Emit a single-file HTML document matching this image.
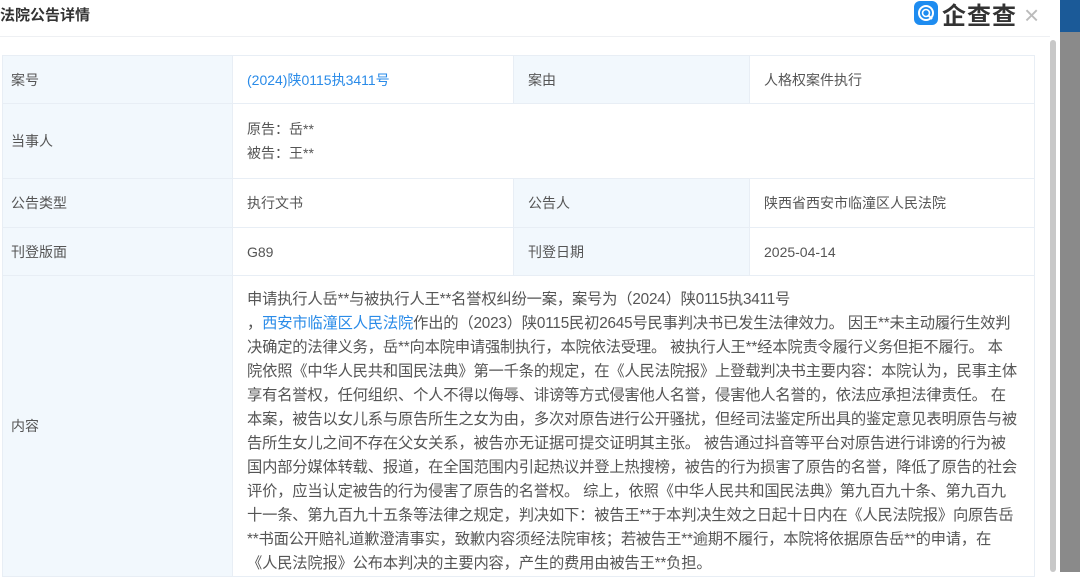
<!DOCTYPE html>
<html><head><meta charset="utf-8"><style>
body{margin:0;width:1080px;height:572px;overflow:hidden;background:#fff;font-family:"Liberation Sans","Noto Sans CJK SC",sans-serif;color:#555;position:relative}
.title{position:absolute;left:0;top:4px;font-size:15px;font-weight:bold;color:#333}
.logo{position:absolute;left:914px;top:0;height:26px;display:flex;align-items:center;font-size:24px;color:#333;font-weight:bold;letter-spacing:1px}
.logo .ic{width:24px;height:24px;background:#1e8cf0;border-radius:6px;margin-right:4px;display:flex;align-items:center;justify-content:center}
.x{position:absolute;left:1024px;top:0;font-size:26px;color:#bbb;font-weight:200}
.hr{position:absolute;left:0;top:36px;width:1050px;height:1px;background:#eef0f3}
.sb{position:absolute;left:1050px;top:40px;width:6px;height:532px;background:#c8c8c8;border-radius:3px}
.dark{position:absolute;left:1060px;top:0;width:20px;height:572px;background:#8a8a8a}
.darkt{position:absolute;left:1060px;top:0;width:20px;height:32px;background:#1b5a98}
table{position:absolute;left:2px;top:55px;border-collapse:collapse;font-size:14px}
td{border:1px solid #e8eef5;padding:0 0 0 14px;vertical-align:middle}
td.l{background:#f2f8fd;color:#555}
td.first{padding-left:8px}
a{color:#2a8be8;text-decoration:none}
.c div{white-space:nowrap;height:24px;line-height:24px;font-size:15.3px;letter-spacing:-0.2px}
</style></head><body>
<div class="title">法院公告详情</div>
<div class="logo"><div class="ic"><svg width="18" height="18" viewBox="0 0 18 18"><circle cx="9" cy="9" r="7" fill="none" stroke="#fff" stroke-width="2"/><circle cx="9" cy="9" r="3.5" fill="none" stroke="#fff" stroke-width="1.6"/><path d="M11 11l4 4" stroke="#fff" stroke-width="2"/></svg></div>企查查</div>
<div class="x">×</div>
<div class="hr"></div>
<table>
<tr style="height:48px"><td class="l first" style="width:221px">案号</td><td style="width:266px"><a>(2024)陕0115执3411号</a></td><td class="l" style="width:221px">案由</td><td style="width:270px">人格权案件执行</td></tr>
<tr style="height:75px"><td class="l first">当事人</td><td colspan="3" style="line-height:24px">原告：岳**<br>被告：王**</td></tr>
<tr style="height:49px"><td class="l first">公告类型</td><td>执行文书</td><td class="l">公告人</td><td>陕西省西安市临潼区人民法院</td></tr>
<tr style="height:48px"><td class="l first">刊登版面</td><td>G89</td><td class="l">刊登日期</td><td>2025-04-14</td></tr>
<tr style="height:300px"><td class="l first">内容</td><td colspan="3" class="c" style="vertical-align:top;padding-top:12px;padding-left:14px">
<div>申请执行人岳**与被执行人王**名誉权纠纷一案，案号为（2024）陕0115执3411号</div>
<div>，<a>西安市临潼区人民法院</a>作出的（2023）陕0115民初2645号民事判决书已发生法律效力。 因王**未主动履行生效判</div>
<div>决确定的法律义务，岳**向本院申请强制执行，本院依法受理。 被执行人王**经本院责令履行义务但拒不履行。 本</div>
<div>院依照《中华人民共和国民法典》第一千条的规定，在《人民法院报》上登载判决书主要内容：本院认为，民事主体</div>
<div>享有名誉权，任何组织、个人不得以侮辱、诽谤等方式侵害他人名誉，侵害他人名誉的，依法应承担法律责任。 在</div>
<div>本案，被告以女儿系与原告所生之女为由，多次对原告进行公开骚扰，但经司法鉴定所出具的鉴定意见表明原告与被</div>
<div>告所生女儿之间不存在父女关系，被告亦无证据可提交证明其主张。 被告通过抖音等平台对原告进行诽谤的行为被</div>
<div>国内部分媒体转载、报道，在全国范围内引起热议并登上热搜榜，被告的行为损害了原告的名誉，降低了原告的社会</div>
<div>评价，应当认定被告的行为侵害了原告的名誉权。 综上，依照《中华人民共和国民法典》第九百九十条、第九百九</div>
<div>十一条、第九百九十五条等法律之规定，判决如下：被告王**于本判决生效之日起十日内在《人民法院报》向原告岳</div>
<div>**书面公开赔礼道歉澄清事实，致歉内容须经法院审核；若被告王**逾期不履行，本院将依据原告岳**的申请，在</div>
<div>《人民法院报》公布本判决的主要内容，产生的费用由被告王**负担。</div>
</td></tr>
</table>
<div class="sb"></div>
<div class="dark"></div><div class="darkt"></div>
</body></html>
